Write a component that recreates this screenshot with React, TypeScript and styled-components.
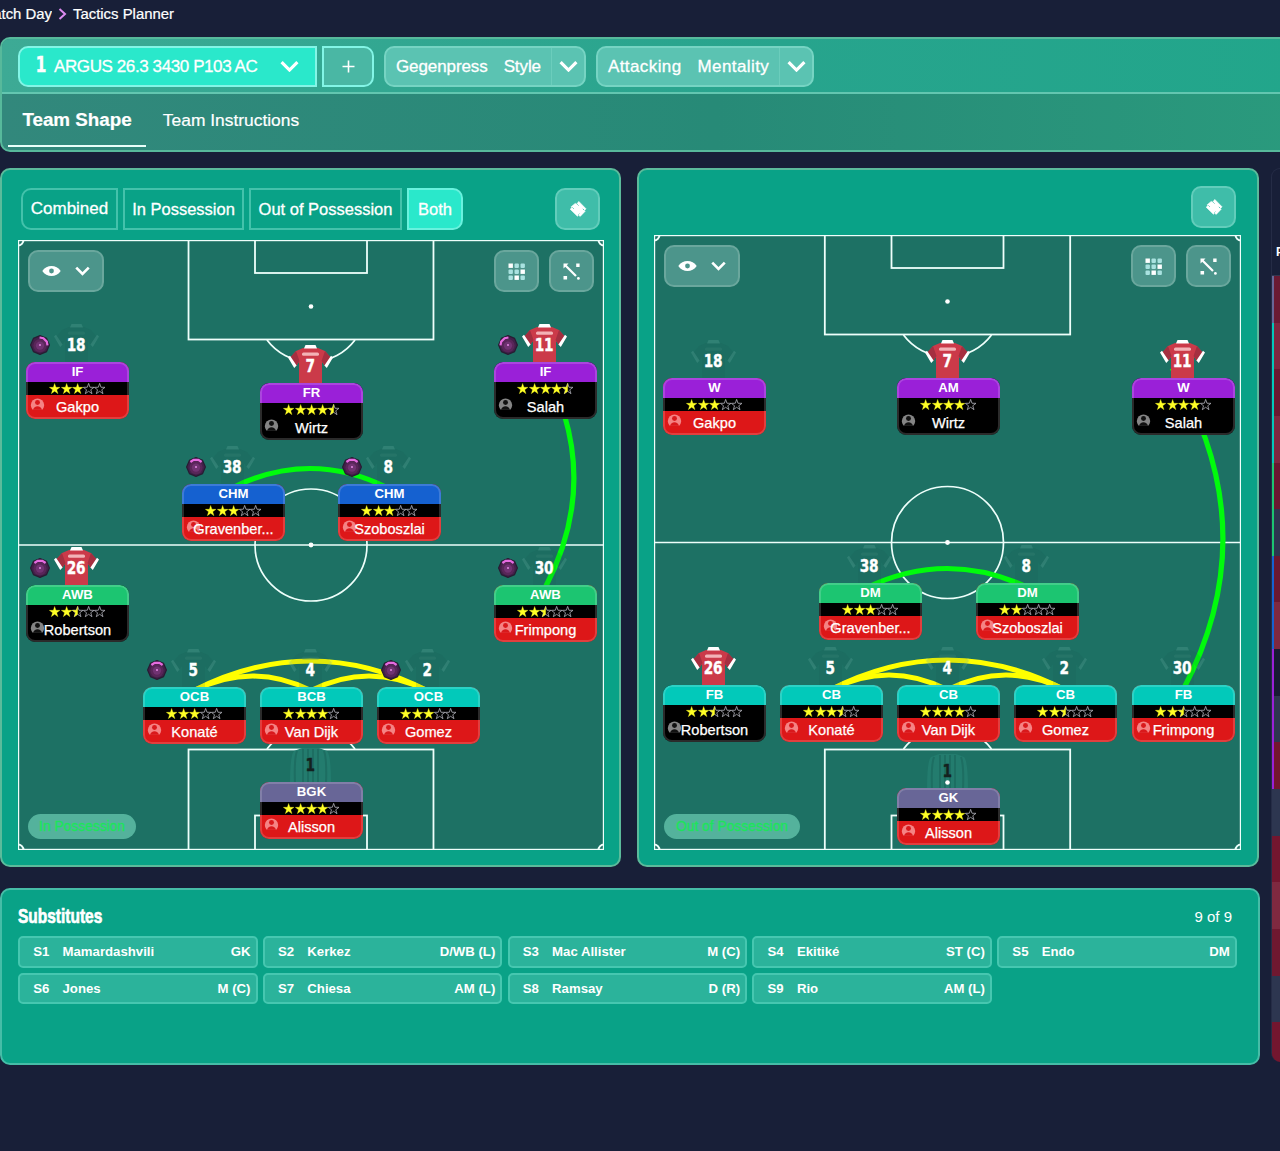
import React from "react";
import styled, { createGlobalStyle, css } from "styled-components";

const GlobalStyle = createGlobalStyle`
  * {
    box-sizing: border-box;
  }
  body {
    margin: 0;
    background: #181f38;
    color: white;
    font-family: "Liberation Sans", Arial, sans-serif;
  }
`;

const Page = styled.div`
  width: 1280px;
  height: 1151px;
  overflow: hidden;
  background: #181f38;
`;

const Breadcrumb = styled.div`
  display: flex;
  align-items: center;
  height: 37px;
  padding-bottom: 9px;
  font-size: 14.9px;
  -webkit-text-stroke: 0.2px white;
`;

const CrumbParent = styled.div`
  display: flex;
  justify-content: flex-end;
  width: 52px;
  overflow: hidden;
  white-space: nowrap;
`;

const CrumbArrow = styled.svg`
  width: 9px;
  height: 12px;
  margin: 0 6px;
`;

const TopPanel = styled.div`
  width: 1300px;
  height: 115px;
  border: 2px solid #57b99b;
  border-radius: 10px;
  overflow: hidden;
  background: linear-gradient(90deg, #32887c, #278a77 55%, #2a9a7d);
`;

const Toolbar = styled.div`
  display: flex;
  align-items: center;
  height: 55px;
  padding: 1px 16px 0;
  border-bottom: 2px solid #63c6b0;
  background: linear-gradient(90deg, #3daa95, #27a48d 60%, #22a68b);
`;

const toolButton = css`
  display: flex;
  align-items: center;
  height: 41px;
  font-size: 17px;
  white-space: nowrap;
  -webkit-text-stroke: 0.3px white;
`;

const TacticButton = styled.div`
  ${toolButton}
  width: 299px;
  padding: 0 16px 0 14px;
  border: 2px solid #83f5e6;
  border-radius: 10px 0 0 10px;
  background: #2ae8cb;
  letter-spacing: -0.4px;
`;

const TacticNumber = styled.div`
  width: 11px;
  margin: -2px 9px 0 0;
  font: 700 21px "DejaVu Sans", sans-serif;
  transform: scaleX(0.75);
`;

const TacticName = styled.div`
  padding-top: 2px;
`;

const AddButton = styled.div`
  ${toolButton}
  justify-content: center;
  width: 52px;
  margin: 0 10px 0 5px;
  border: 2px solid #83f5e6;
  border-radius: 0 10px 10px 0;
  background: #4ab7a4;
`;

const Dropdown = styled.div<{ $width: number; $tracking: string }>`
  ${toolButton}
  width: ${(p) => p.$width}px;
  margin-right: 10px;
  border: 2px solid #76d4c3;
  border-radius: 10px;
  background: #5bc3b2;
  letter-spacing: ${(p) => p.$tracking};
`;

const DropdownText = styled.div`
  display: flex;
  flex: 1;
  gap: 16px;
  padding: 2px 0 0 10px;
`;

const DropdownArrow = styled.div`
  display: flex;
  align-items: center;
  justify-content: center;
  width: 33px;
  height: 100%;
  border-left: 1px solid #6bcdbc;
`;

const Tabs = styled.div`
  display: flex;
  padding: 0 6px;
`;

const Tab = styled.div<{ $active?: boolean }>`
  display: flex;
  align-items: center;
  justify-content: center;
  width: ${(p) => (p.$active ? 138 : 170)}px;
  height: 53px;
  padding-top: ${(p) => (p.$active ? 0 : 2)}px;
  border-bottom: 2px solid ${(p) => (p.$active ? "#e8fffa" : "transparent")};
  font-size: ${(p) => (p.$active ? 18.8 : 17.4)}px;
  font-weight: ${(p) => (p.$active ? 700 : 400)};
  -webkit-text-stroke: 0.2px white;
`;

const Main = styled.div`
  display: flex;
  justify-content: space-between;
  padding-top: 16px;
`;

const Content = styled.div`
  display: flex;
  flex-direction: column;
  gap: 21px;
  width: 1260px;
`;

const PitchRow = styled.div`
  display: flex;
  gap: 16px;
`;

const PitchPanel = styled.div<{ $second?: boolean }>`
  width: ${(p) => (p.$second ? 622 : 621)}px;
  height: 699px;
  padding: ${(p) => (p.$second ? "15px 16px 0 15px" : "18px 15px 0 16px")};
  border: 2px solid #5bbb9b;
  border-radius: 10px;
  background: #09a287;
`;

const PitchHeader = styled.div<{ $second?: boolean }>`
  display: flex;
  justify-content: space-between;
  height: ${(p) => (p.$second ? 50 : 52)}px;
  padding: ${(p) => (p.$second ? "1px 5px 0 0" : "0 4px 0 3px")};
`;

const Segments = styled.div`
  display: flex;
  gap: 5px;
`;

const Segment = styled.div<{ $width: number; $active?: boolean }>`
  display: flex;
  align-items: center;
  justify-content: center;
  width: ${(p) => p.$width}px;
  height: 42px;
  border: 2px solid ${(p) => (p.$active ? "#69f2de" : "#43c2ab")};
  background: ${(p) => (p.$active ? "#2ae8cb" : "transparent")};
  font-size: 16.5px;
  white-space: nowrap;
  -webkit-text-stroke: 0.3px white;

  &:first-child {
    border-radius: 10px 0 0 10px;
    font-size: 17px;
  }
  &:last-child {
    border-radius: 0 10px 10px 0;
  }
`;

const IconButton = styled.div<{ $width?: number; $bright?: boolean }>`
  display: flex;
  align-items: center;
  justify-content: center;
  gap: 14px;
  width: ${(p) => p.$width || 45}px;
  height: 42px;
  border: 2px solid ${(p) => (p.$bright ? "#62cdbb" : "#6aa79d")};
  border-radius: 10px;
  background: ${(p) => (p.$bright ? "#3fbda9" : "#4c958b")};
`;

const Field = styled.div<{ $width: number; $height: number }>`
  position: relative;
  width: ${(p) => p.$width}px;
  height: ${(p) => p.$height}px;
  background: #1d7164;
`;

const Markings = styled.svg`
  position: absolute;
  inset: 0;
`;

const FieldControls = styled.div`
  position: absolute;
  top: 10px;
  left: 10px;
  right: 10.5px;
  display: flex;
  gap: 10px;
`;

const Spacer = styled.div`
  flex: 1;
`;

const PhasePill = styled.div<{ $width: number }>`
  position: absolute;
  left: 10px;
  bottom: 11px;
  width: ${(p) => p.$width}px;
  height: 25px;
  border-radius: 13px;
  background: #54b29c;
  color: #1ee25c;
  font-size: 13.8px;
  line-height: 26px;
  text-align: center;
  -webkit-text-stroke: 0.4px #1ee25c;
`;

const PlayerSlot = styled.div<{ $x: number; $y: number }>`
  position: absolute;
  left: ${(p) => p.$x}px;
  top: ${(p) => p.$y - 38}px;
  width: 103px;
`;

const ShirtRow = styled.div`
  position: relative;
  display: flex;
  justify-content: center;
  height: 38px;
  padding-right: 3px;
`;

const ShirtNumber = styled.div<{ $dark?: boolean }>`
  position: absolute;
  left: 0;
  right: 3px;
  top: 9px;
  color: ${(p) => (p.$dark ? "#14211f" : "white")};
  font: 700 18.5px/23px "DejaVu Sans", sans-serif;
  letter-spacing: -0.5px;
  text-align: center;
  transform: scaleX(0.74);
  -webkit-text-stroke: 0.4px ${(p) => (p.$dark ? "#14211f" : "white")};
`;

const Ball = styled.svg`
  position: absolute;
  left: 4px;
  top: 11px;
`;

const Card = styled.div<{ $out?: boolean }>`
  position: relative;
  height: 57px;
  overflow: hidden;
  border-radius: 9px;
  background: ${(p) => (p.$out ? "#dd1718" : "#000")};

  &::after {
    content: "";
    position: absolute;
    inset: 0;
    border: 2px solid rgba(255, 255, 255, 0.17);
    border-radius: 9px;
  }
`;

const Role = styled.div<{ $color: string }>`
  height: 20px;
  background: ${(p) => p.$color};
  font-size: 13.2px;
  font-weight: 700;
  line-height: 20px;
  text-align: center;
`;

const Stars = styled.div`
  display: flex;
  align-items: center;
  justify-content: center;
  height: 13px;
  padding-top: 1px;
  background: black;
`;

const PlayerName = styled.div`
  position: relative;
  height: 24px;
  font-size: 14.6px;
  line-height: 24px;
  text-align: center;
  -webkit-text-stroke: 0.25px white;
`;

const Face = styled.svg`
  position: absolute;
  left: 4px;
  top: 2px;
`;

const NameText = styled.span`
  position: relative;
`;

const SubsPanel = styled.div`
  width: 1260px;
  height: 177px;
  padding: 14px 21px 0 16px;
  border: 2px solid #46bda7;
  border-radius: 10px;
  background: #09a287;
`;

const SubsHeader = styled.div`
  display: flex;
  justify-content: space-between;
  align-items: center;
  height: 24px;
  margin-bottom: 8px;
  padding-right: 5px;
  font-size: 15px;
`;

const SubsTitle = styled.div`
  font-size: 20.5px;
  font-weight: 700;
  transform: scaleX(0.755);
  transform-origin: left;
  -webkit-text-stroke: 0.7px white;
`;

const SubsGrid = styled.div`
  display: grid;
  grid-template-columns: repeat(5, 239.5px);
  gap: 5px 5.3px;
`;

const SubRow = styled.div`
  display: flex;
  align-items: center;
  height: 31.5px;
  padding-right: 5px;
  border: 2px solid #46c7b0;
  border-radius: 5px;
  background: #2bb39b;
  font-size: 13.2px;
  font-weight: 700;
`;

const SubSlot = styled.div`
  width: 42.5px;
  text-align: center;
`;

const SubName = styled.div`
  flex: 1;
`;

const SidePanel = styled.div`
  width: 9px;
  height: 894px;
  overflow: hidden;
  border-left: 1px solid #252c46;
  border-top: 1px solid #252c46;
  border-radius: 9px 0 0 9px;
`;

const SideHeader = styled.div`
  height: 107px;
  padding: 76px 0 0 4px;
  border-bottom: 1px solid #303750;
  font-size: 12px;
  font-weight: 700;
`;

const SideRow = styled.div<{ $stripe?: string; $fill: string }>`
  height: 46.65px;
  border-left: 2px solid ${(p) => p.$stripe || p.$fill};
  background: ${(p) => p.$fill};
`;

const PURPLE = "#9a20d8";
const BLUE = "#1561d0";
const GREEN = "#1cc571";
const TEAL = "#02c9ba";
const SLATE = "#686697";

type Player = {
  x: number;
  y: number;
  no: number;
  role: string;
  color: string;
  stars: number;
  name: string;
  fit?: boolean;
  keeper?: boolean;
  ball?: number;
};

type Link = { d: string; color: string };

// ball is the angle of the duty highlight
const inPossession: Player[] = [
  { x: 8, y: 122, no: 18, role: "IF", color: PURPLE, stars: 3, name: "Gakpo", ball: 45 },
  { x: 242, y: 142.5, no: 7, role: "FR", color: PURPLE, stars: 4.5, name: "Wirtz", fit: true },
  { x: 476, y: 122, no: 11, role: "IF", color: PURPLE, stars: 4.5, name: "Salah", fit: true, ball: -45 },
  { x: 164, y: 244, no: 38, role: "CHM", color: BLUE, stars: 3, name: "Gravenber...", ball: 0 },
  { x: 320, y: 244, no: 8, role: "CHM", color: BLUE, stars: 3, name: "Szoboszlai", ball: 0 },
  { x: 8, y: 345, no: 26, role: "AWB", color: GREEN, stars: 2.5, name: "Robertson", fit: true, ball: 0 },
  { x: 476, y: 345, no: 30, role: "AWB", color: GREEN, stars: 2.5, name: "Frimpong", ball: 0 },
  { x: 125, y: 447, no: 5, role: "OCB", color: TEAL, stars: 3, name: "Konaté", ball: 0 },
  { x: 242, y: 447, no: 4, role: "BCB", color: TEAL, stars: 4, name: "Van Dijk" },
  { x: 359, y: 447, no: 2, role: "OCB", color: TEAL, stars: 3, name: "Gomez", ball: 0 },
  { x: 242, y: 542, no: 1, role: "BGK", color: SLATE, stars: 4, name: "Alisson", keeper: true },
];

const outOfPossession: Player[] = [
  { x: 9, y: 143, no: 18, role: "W", color: PURPLE, stars: 3, name: "Gakpo" },
  { x: 243, y: 143, no: 7, role: "AM", color: PURPLE, stars: 4, name: "Wirtz", fit: true },
  { x: 478, y: 143, no: 11, role: "W", color: PURPLE, stars: 4, name: "Salah", fit: true },
  { x: 165, y: 348, no: 38, role: "DM", color: GREEN, stars: 3, name: "Gravenber..." },
  { x: 322, y: 348, no: 8, role: "DM", color: GREEN, stars: 2, name: "Szoboszlai" },
  { x: 9, y: 450, no: 26, role: "FB", color: TEAL, stars: 2.5, name: "Robertson", fit: true },
  { x: 126, y: 450, no: 5, role: "CB", color: TEAL, stars: 3.5, name: "Konaté" },
  { x: 243, y: 450, no: 4, role: "CB", color: TEAL, stars: 4, name: "Van Dijk" },
  { x: 360, y: 450, no: 2, role: "CB", color: TEAL, stars: 2.5, name: "Gomez" },
  { x: 478, y: 450, no: 30, role: "FB", color: TEAL, stars: 2.5, name: "Frimpong" },
  { x: 243, y: 552.5, no: 1, role: "GK", color: SLATE, stars: 4, name: "Alisson", keeper: true },
];

const inLinks: Link[] = [
  { d: "M518 112 Q589 230 527 348", color: "#00fb0c" },
  { d: "M214 248 Q292 209 370 248", color: "#00fb0c" },
  { d: "M175 451 Q292 391 410 451", color: "#ffff00" },
  { d: "M175 451 Q235 421 294 451", color: "#ffff00" },
  { d: "M292 451 Q351 421 410 451", color: "#ffff00" },
];

const outLinks: Link[] = [
  { d: "M518 133 Q614 294 529 455", color: "#00fb0c" },
  { d: "M212 353 Q293 314 375 353", color: "#00fb0c" },
  { d: "M176 455 Q293 395 411 455", color: "#ffff00" },
  { d: "M176 455 Q235 425 294 455", color: "#ffff00" },
  { d: "M293 455 Q352 425 411 455", color: "#ffff00" },
];

const subs = [
  ["S1", "Mamardashvili", "GK"],
  ["S2", "Kerkez", "D/WB (L)"],
  ["S3", "Mac Allister", "M (C)"],
  ["S4", "Ekitiké", "ST (C)"],
  ["S5", "Endo", "DM"],
  ["S6", "Jones", "M (C)"],
  ["S7", "Chiesa", "AM (L)"],
  ["S8", "Ramsay", "D (R)"],
  ["S9", "Rio", "AM (L)"],
];

const sideRows = [
  ["#6a1a33", SLATE],
  ["#7e2940", TEAL],
  ["#6a1830", TEAL],
  ["#7e2940", TEAL],
  ["#6a1830", GREEN],
  ["#2d3650", GREEN],
  ["#6a1830", BLUE],
  ["#7e2940", BLUE],
  ["#171b33", PURPLE],
  ["#2d3650", PURPLE],
  ["#73162f", PURPLE],
  ["#2d3650"],
  ["#73162f"],
  ["#7e2940"],
  ["#6f1830"],
  ["#2d3650"],
  ["#73162f"],
];

const Chevron = ({ size = 18, weight = 3 }) => (
  <svg width={size} height={size * 0.65} viewBox="0 0 18 11.7">
    <path d="M1.5 2 L9 9.5 L16.5 2" fill="none" stroke="white" strokeWidth={weight} />
  </svg>
);

const EyeIcon = () => (
  <svg width="19" height="12" viewBox="0 0 19 12">
    <path d="M0.3 6 C4.5 -0.8 14.5 -0.8 18.7 6 C14.5 12.8 4.5 12.8 0.3 6Z" fill="white" />
    <circle cx="9.5" cy="6" r="2.4" fill="#4c958b" />
  </svg>
);

const GridIcon = () => (
  <svg width="17" height="17" viewBox="0 0 17 17">
    {[0, 1, 2].map((row) =>
      [0, 1, 2].map((col) => {
        const bright = [0, 5, 7].includes(row * 3 + col);
        return (
          <rect
            key={`${row}-${col}`}
            x={0.5 + col * 6}
            y={0.5 + row * 6}
            width="4.4"
            height="4.4"
            rx={bright ? 0 : 1}
            fill={bright ? "white" : "#a9e2e0"}
          />
        );
      })
    )}
  </svg>
);

const MovementIcon = () => (
  <svg width="17" height="17" viewBox="0 0 17 17">
    <path d="M2.5 2.5 L13 13" stroke="white" strokeWidth="2.2" />
    <path d="M0.5 0.5 H5.5 L0.5 5.5Z M13.2 0.5 h3.4 v3.4 h-3.4Z M0.5 13 h3.6 v3.6 h-3.6Z" fill="white" />
    <circle cx="15.4" cy="15.4" r="1.4" fill="white" />
  </svg>
);

const ClearIcon = () => (
  <svg width="18" height="18" viewBox="0 0 18 18">
    <path
      d="M6.2 3.4 L7.6 4.2 L9.8 1.4 L17 8.8 L15.6 10.4 L16.2 11.2 L11.2 16.4 L9.6 15 L8.4 16.2 L1.2 9.2 L2.8 7.6 L2.2 6.8Z"
      fill="white"
      stroke="white"
      strokeWidth="0.6"
      strokeLinejoin="round"
    />
    <path d="M3.4 7.4 L4.8 8.8 M8.2 4.2 L9.6 5.6 M9.4 14.6 L10.4 13.6 M13.8 8.8 L15.2 10.2" stroke="#3fbda9" strokeWidth="0.8" />
  </svg>
);

const Shirt = ({ faded }: { faded: boolean }) => (
  <svg width="45" height="40" viewBox="0 0 45 40">
    <path
      d="M15 3 L8 6 L1 14 L8 21 L11 17 V40 H34 V17 L37 21 L44 14 L37 6 L30 3Z"
      fill={faded ? "#16584f" : "#cb3a49"}
      opacity={faded ? 0.13 : 1}
    />
    {!faded && <path d="M8 6 L1 14 L8 21 L11.5 16Z M37 6 L44 14 L37 21 L33.5 16Z" fill="#a52f40" />}
    <g fill={faded ? "#8ed0c5" : "white"} opacity={faded ? 0.17 : 1}>
      <path d="M17.5 0 H27.5 L29 3.5 H16Z" />
      <path d="M0 12.5 L2 10.8 L8.6 20.5 L6.2 23Z M45 12.5 L43 10.8 L36.4 20.5 L38.8 23Z" />
    </g>
    <rect
      x="14"
      y="7.6"
      width="17"
      height="3.2"
      rx="1.5"
      fill={faded ? "#3c8578" : "#f3b3b7"}
      opacity={faded ? 0.3 : 1}
    />
  </svg>
);

const KeeperShirt = () => (
  <svg width="45" height="40" viewBox="0 0 45 40">
    <path d="M14 4 L6 7 Q2 11 2 40 H43 Q43 11 39 7 L31 4Z" fill="#237c6e" />
    <path
      d="M9 7 Q6 15 7 40 M15 5 V40 M20 5 V40 M25 5 V40 M30 5 V40 M36 7 Q39 15 38 40"
      fill="none"
      stroke="#1d6e62"
      strokeWidth="2"
    />
  </svg>
);

const DutyBall = ({ angle }: { angle: number }) => (
  <Ball width="20" height="20" viewBox="0 0 20 20">
    <path
      d="M10 0.6 L16.6 3.4 L19.4 10 L16.6 16.6 L10 19.4 L3.4 16.6 L0.6 10 L3.4 3.4Z"
      fill="#43204a"
      stroke="#281c33"
      strokeWidth="1.2"
      strokeLinejoin="round"
    />
    <circle cx="10" cy="10.6" r="6.6" fill="#592659" />
    <circle cx="10" cy="10.6" r="4.2" fill="#703372" />
    <path
      d="M4.4 5 L7.6 2.8 H12.4 L15.6 5"
      fill="none"
      stroke="#e66be0"
      strokeWidth="2.2"
      transform={`rotate(${angle} 10 10)`}
    />
    <circle cx="10" cy="10" r="1" fill="#e48ae4" />
  </Ball>
);

const STAR = "M5.6 0.4 L6.9 4.2 L10.9 4.3 L7.7 6.7 L8.9 10.6 L5.6 8.2 L2.3 10.6 L3.5 6.7 L0.3 4.3 L4.3 4.2Z";
const HALF_STAR = "M5.6 0.4 V8.2 L2.3 10.6 L3.5 6.7 L0.3 4.3 L4.3 4.2Z";

const StarRating = ({ value }: { value: number }) => (
  <Stars>
    {[0, 1, 2, 3, 4].map((i) => (
      <svg key={i} width="11.3" height="11.3" viewBox="0 0 11.2 11.2">
        {value < i + 1 && <path d={STAR} fill="none" stroke="#b2b2ba" strokeWidth="0.8" />}
        {value > i && <path d={value >= i + 1 ? STAR : HALF_STAR} fill="#ffff26" stroke="#ffff26" strokeWidth="0.3" />}
      </svg>
    ))}
  </Stars>
);

const FaceIcon = ({ fit }: { fit?: boolean }) => (
  <Face width="15" height="15" viewBox="0 0 14 14">
    <path d="M2.2 11.6 A6.2 6.2 0 1 1 11.8 11.6Z" fill={fit ? "#858585" : "#f58384"} />
    <circle cx="7" cy="5.2" r="2.3" fill={fit ? "#111" : "#d9191c"} />
    <path d="M3 12 C3.4 7.6 10.6 7.6 11 12Z" fill={fit ? "#111" : "#d9191c"} />
  </Face>
);

const PlayerCard = ({ player }: { player: Player }) => (
  <PlayerSlot $x={player.x} $y={player.y}>
    <ShirtRow>
      {player.keeper ? <KeeperShirt /> : <Shirt faded={!player.fit} />}
      <ShirtNumber $dark={player.keeper}>{player.no}</ShirtNumber>
      {player.ball !== undefined && <DutyBall angle={player.ball} />}
    </ShirtRow>
    <Card $out={!player.fit}>
      <Role $color={player.color}>{player.role}</Role>
      <StarRating value={player.stars} />
      <PlayerName>
        <FaceIcon fit={player.fit} />
        <NameText>{player.name}</NameText>
      </PlayerName>
    </Card>
  </PlayerSlot>
);

type PitchProps = {
  width: number;
  height: number;
  players: Player[];
  links: Link[];
  label: string;
  labelWidth: number;
};

const Pitch = ({ width, height, players, links, label, labelWidth }: PitchProps) => {
  const mid = width / 2;
  const box = width * 0.209;
  const halfway = height / 2;
  return (
    <Field $width={width} $height={height}>
      <Markings width={width} height={height} fill="none" stroke="#eefffb" strokeWidth="2">
        <rect x="0.5" y="0.5" width={width - 1} height={height - 1} strokeWidth="1.4" />
        <path d={`M0 ${halfway} H${width}`} strokeWidth="1.7" />
        <circle cx={mid} cy={halfway} r="56" strokeWidth="1.7" />
        <circle cx={mid} cy={halfway} r="2.4" fill="white" stroke="none" />
        <rect x={mid - box} y="0" width={box * 2} height="99.5" strokeWidth="1.8" />
        <rect x={mid - 56} y="0" width="112" height="33" strokeWidth="1.8" />
        <rect x={mid - box} y={height - 100.5} width={box * 2} height="101" strokeWidth="1.8" />
        <rect x={mid - 56} y={height - 34.5} width="112" height="35" strokeWidth="1.8" />
        <path d={`M${mid - 44} 100 A55 55 0 0 0 ${mid + 44} 100`} strokeWidth="1.8" />
        <path d={`M${mid - 44} ${height - 101} A55 55 0 0 1 ${mid + 44} ${height - 101}`} strokeWidth="1.8" />
        <circle cx={mid} cy="66.5" r="2.3" fill="white" stroke="none" />
        {[0, width].map((x) => [0, height].map((y) => <circle key={`${x}-${y}`} cx={x} cy={y} r="5.5" />))}
        {links.map((link) => (
          <path key={link.d} d={link.d} stroke={link.color} strokeWidth="5.2" />
        ))}
      </Markings>
      {players.map((player) => (
        <PlayerCard key={player.no} player={player} />
      ))}
      {height > 612 && (
        <Markings width={width} height={height - 63}>
          <circle cx={mid} cy={height - 67.5} r="2.3" fill="white" />
        </Markings>
      )}
      <FieldControls>
        <IconButton $width={76}>
          <EyeIcon />
          <Chevron size={15} weight={3.2} />
        </IconButton>
        <Spacer />
        <IconButton>
          <GridIcon />
        </IconButton>
        <IconButton>
          <MovementIcon />
        </IconButton>
      </FieldControls>
      <PhasePill $width={labelWidth}>{label}</PhasePill>
    </Field>
  );
};

export default function App() {
  return (
    <Page>
      <GlobalStyle />
      <Breadcrumb>
        <CrumbParent>Match Day</CrumbParent>
        <CrumbArrow viewBox="0 0 9 12">
          <path d="M1.5 1 L7 6 L1.5 11" fill="none" stroke="#dc8cf0" strokeWidth="2" />
        </CrumbArrow>
        <div>Tactics Planner</div>
      </Breadcrumb>
      <TopPanel>
        <Toolbar>
          <TacticButton>
            <TacticNumber>1</TacticNumber>
            <TacticName>ARGUS 26.3 3430 P103 AC</TacticName>
            <Spacer />
            <Chevron size={19} />
          </TacticButton>
          <AddButton>
            <svg width="13" height="13" viewBox="0 0 13 13">
              <path d="M6.5 0.5 V12.5 M0.5 6.5 H12.5" stroke="white" strokeWidth="1.6" />
            </svg>
          </AddButton>
          <Dropdown $width={202} $tracking="-0.1px">
            <DropdownText>
              <span>Gegenpress</span>
              <span>Style</span>
            </DropdownText>
            <DropdownArrow>
              <Chevron size={19} />
            </DropdownArrow>
          </Dropdown>
          <Dropdown $width={218} $tracking="0.4px">
            <DropdownText>
              <span>Attacking</span>
              <span>Mentality</span>
            </DropdownText>
            <DropdownArrow>
              <Chevron size={19} />
            </DropdownArrow>
          </Dropdown>
        </Toolbar>
        <Tabs>
          <Tab $active>Team Shape</Tab>
          <Tab>Team Instructions</Tab>
        </Tabs>
      </TopPanel>
      <Main>
        <Content>
          <PitchRow>
            <PitchPanel>
              <PitchHeader>
                <Segments>
                  <Segment $width={97}>Combined</Segment>
                  <Segment $width={121}>In Possession</Segment>
                  <Segment $width={153}>Out of Possession</Segment>
                  <Segment $width={56} $active>
                    Both
                  </Segment>
                </Segments>
                <IconButton $bright>
                  <ClearIcon />
                </IconButton>
              </PitchHeader>
              <Pitch
                width={586}
                height={610}
                players={inPossession}
                links={inLinks}
                label="In Possession"
                labelWidth={108}
              />
            </PitchPanel>
            <PitchPanel $second>
              <PitchHeader $second>
                <Spacer />
                <IconButton $bright>
                  <ClearIcon />
                </IconButton>
              </PitchHeader>
              <Pitch
                width={587}
                height={615}
                players={outOfPossession}
                links={outLinks}
                label="Out of Possession"
                labelWidth={136}
              />
            </PitchPanel>
          </PitchRow>
          <SubsPanel>
            <SubsHeader>
              <SubsTitle>Substitutes</SubsTitle>
              <div>9 of 9</div>
            </SubsHeader>
            <SubsGrid>
              {subs.map(([slot, name, position]) => (
                <SubRow key={slot}>
                  <SubSlot>{slot}</SubSlot>
                  <SubName>{name}</SubName>
                  <div>{position}</div>
                </SubRow>
              ))}
            </SubsGrid>
          </SubsPanel>
        </Content>
        <SidePanel>
          <SideHeader>P</SideHeader>
          {sideRows.map(([fill, stripe], i) => (
            <SideRow key={i} $fill={fill} $stripe={stripe} />
          ))}
        </SidePanel>
      </Main>
    </Page>
  );
}
